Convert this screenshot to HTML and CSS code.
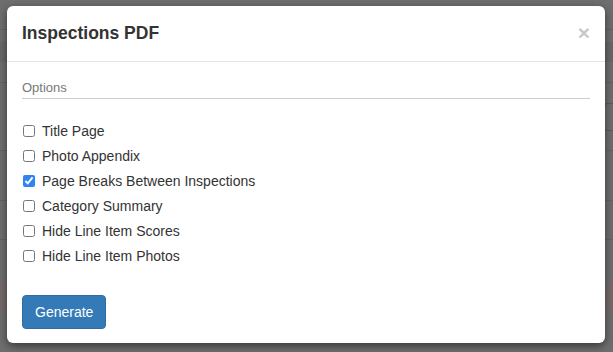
FILE: index.html
```html
<!DOCTYPE html>
<html lang="en">
<head>
    <meta charset="UTF-8">
    <title>Inspections PDF</title>
    <link rel="stylesheet" href="styles.css">
</head>
<body>
    <div class="page">
        <div class="row r1"></div>
        <div class="row r2"></div>
        <div class="row band"></div>
        <div class="row r3"></div>
        <div class="row r4"><span class="input-edge"></span></div>
        <div class="row r5"></div>
        <div class="row r6"></div>
        <div class="row r7"></div>
        <div class="row red"></div>
    </div>

    <div class="modal">
        <div class="modal-header">
            <h4 class="modal-title">Inspections PDF</h4>
            <button class="close">&times;</button>
        </div>
        <div class="modal-body">
            <div class="legend">Options</div>
            <label class="check"><input type="checkbox"> Title Page</label>
            <label class="check"><input type="checkbox"> Photo Appendix</label>
            <label class="check"><input type="checkbox" checked> Page Breaks Between Inspections</label>
            <label class="check"><input type="checkbox"> Category Summary</label>
            <label class="check"><input type="checkbox"> Hide Line Item Scores</label>
            <label class="check"><input type="checkbox"> Hide Line Item Photos</label>
            <button class="btn-primary">Generate</button>
        </div>
    </div>
</body>
</html>
```

FILE: styles.css
```css
body {
    margin: 0;
    width: 613px;
    height: 352px;
    overflow: hidden;
    background-color: #6e6e6e;
    font-family: "Liberation Sans", Arial, sans-serif;
    position: relative;
}
.page {
    display: flex;
    flex-direction: column;
}
.row {
    flex: none;
    border-bottom: 1px solid #636363;
    display: flex;
    justify-content: flex-end;
    align-items: center;
}
.r1 { height: 29px; }
.r2 { height: 12px; border-bottom: none; }
.band { height: 20px; background-color: #686868; border-bottom: none; }
.r3 { height: 20px; }
.r4 { height: 67px; }
.r5 { height: 49px; }
.r6 { height: 38px; }
.r7 { height: 42px; border-bottom: none; }
.red { height: 30px; background-color: #766b6b; border-bottom: none; }
.input-edge {
    width: 8px;
    height: 26px;
    border: 1px solid #5a5a5a;
    border-right: none;
    border-radius: 3px 0 0 3px;
}
.modal {
    position: absolute;
    top: 6px;
    left: 7px;
    width: 598px;
    height: 337px;
    background-color: #fff;
    border-radius: 6px;
    box-shadow: 0 3px 9px rgba(0, 0, 0, 0.5);
}
.modal-header {
    display: flex;
    justify-content: space-between;
    align-items: center;
    padding: 15px;
    border-bottom: 1px solid #e5e5e5;
}
.modal-title {
    margin: 0;
    font-size: 17.5px;
    font-weight: bold;
    line-height: 25px;
    color: #333;
}
.close {
    border: none;
    background: none;
    padding: 0;
    font-size: 21px;
    font-weight: bold;
    line-height: 1;
    color: #c8c8c8;
    margin-top: -2px;
}
.modal-body {
    padding: 15px;
    display: flex;
    flex-direction: column;
    align-items: flex-start;
}
.legend {
    align-self: stretch;
    font-size: 13px;
    color: #777;
    line-height: 20px;
    padding-top: 1px;
    border-bottom: 1px solid #ccc;
    margin-bottom: 19px;
}
.check {
    display: flex;
    align-items: center;
    height: 25px;
    font-size: 14px;
    color: #333;
}
.check input {
    width: 12px;
    height: 12px;
    margin: 0 7px 0 1px;
    accent-color: #2f83f2;
}
.btn-primary {
    margin-top: 27px;
    font-family: "Liberation Sans", Arial, sans-serif;
    font-size: 14px;
    color: #fff;
    background-color: #337ab7;
    border: 1px solid #2e6da4;
    border-radius: 4px;
    padding: 0 12px;
    height: 34px;
    width: 84px;
}
```
